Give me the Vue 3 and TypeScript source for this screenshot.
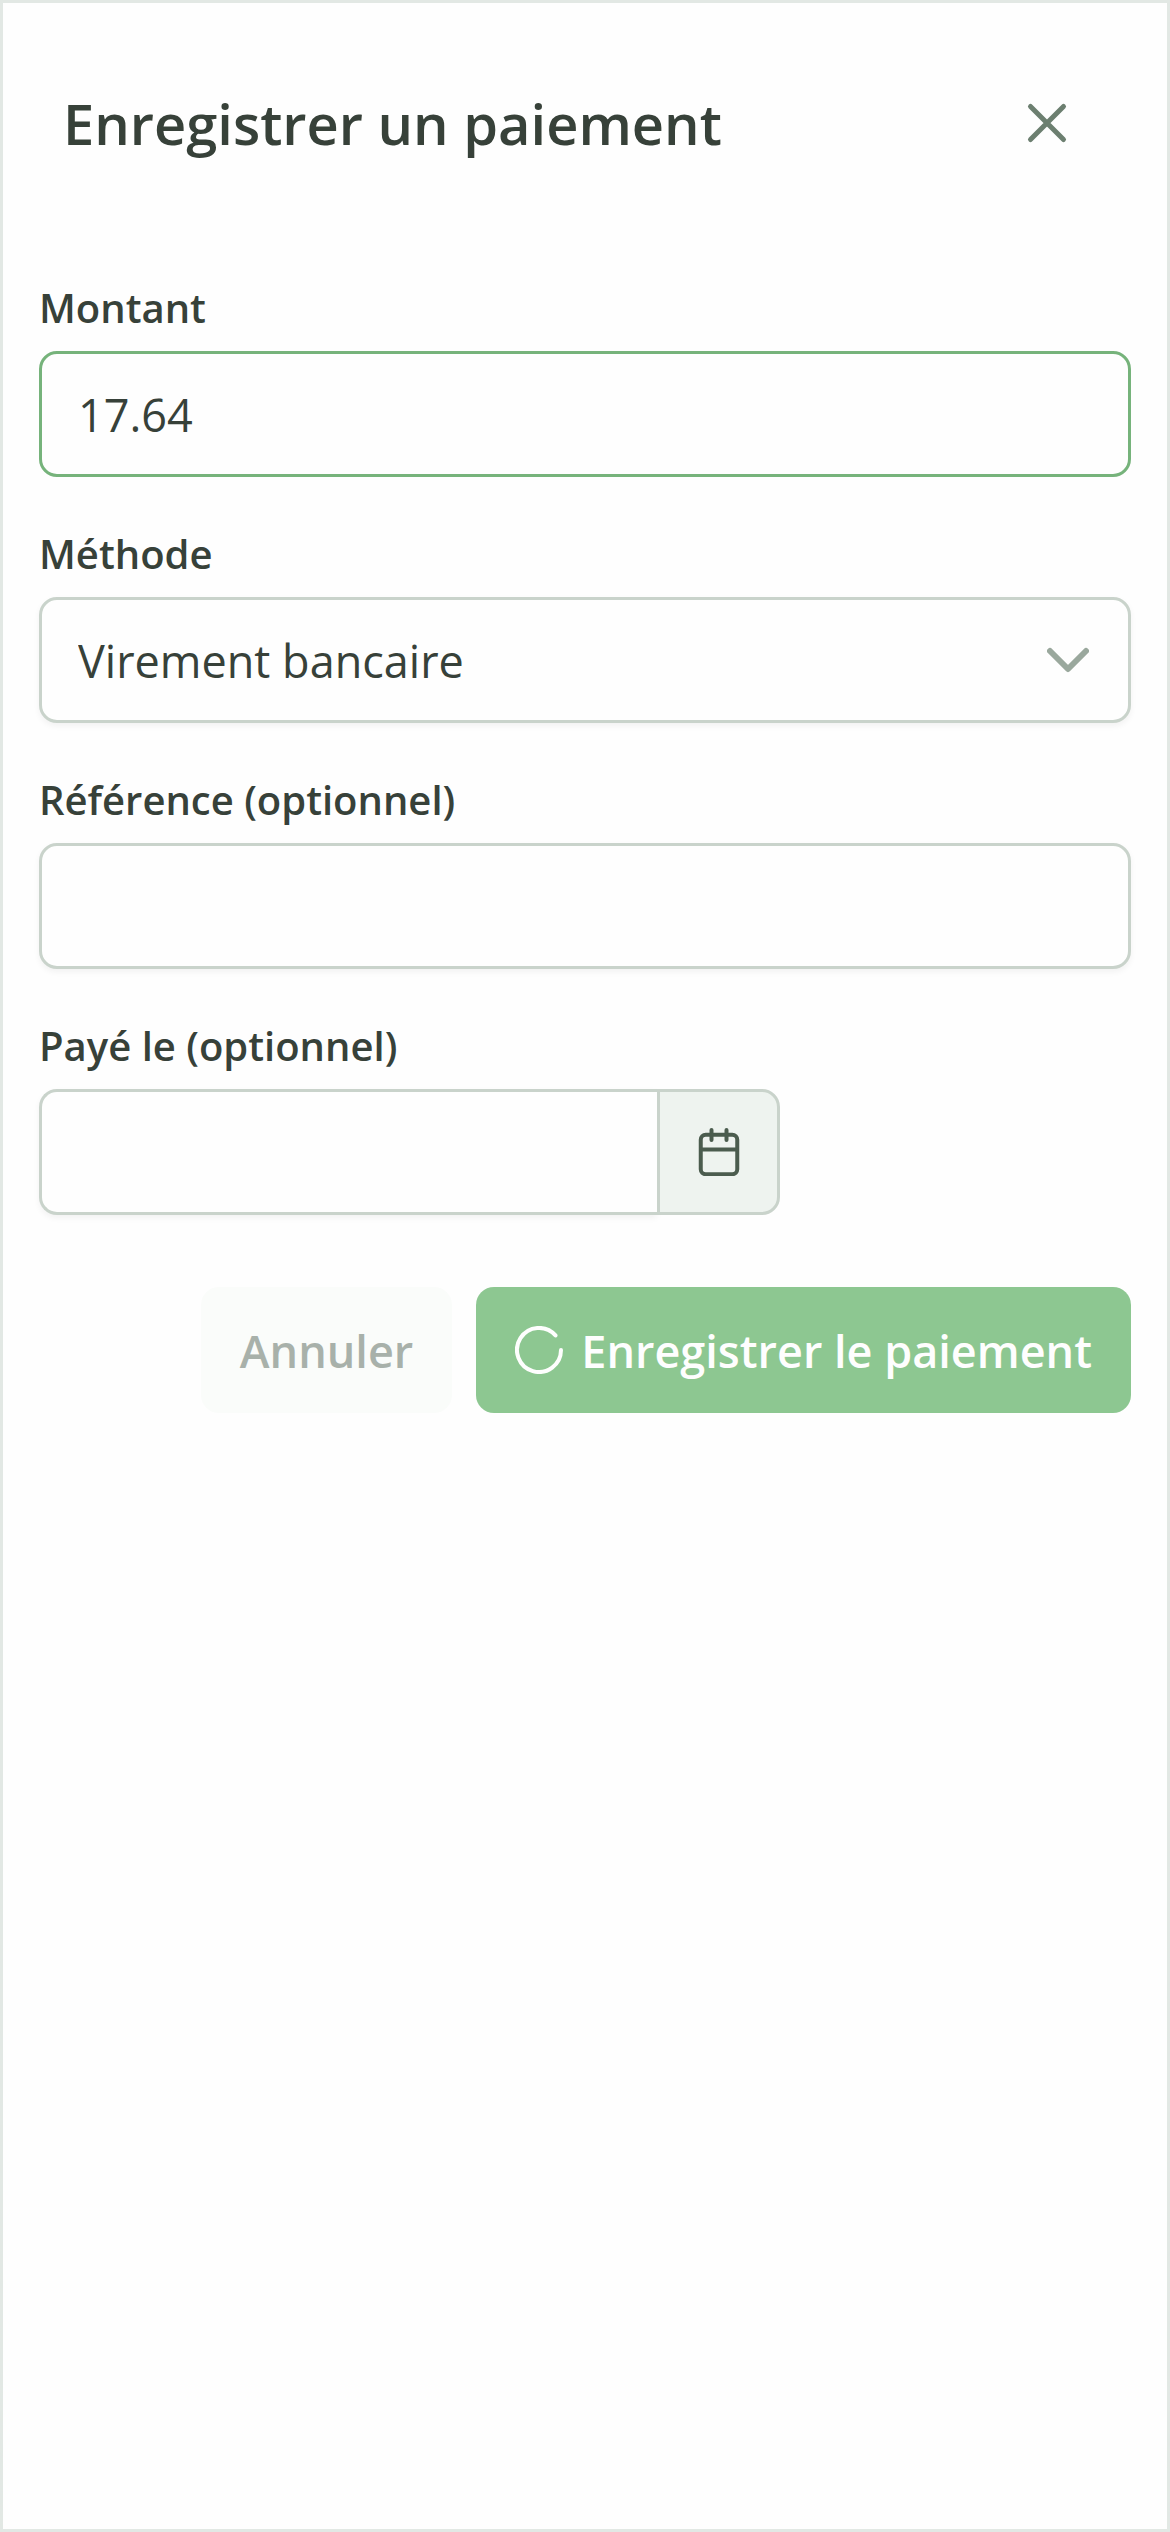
<script setup lang="ts">
import { ref } from 'vue'

const amount = ref('17.64')
const method = ref('transfer')
const reference = ref('')
const paidOn = ref('')
const saving = ref(true)
</script>

<template>
  <main class="dialog" role="dialog" aria-labelledby="dialog-title">
    <header class="header">
      <h1 id="dialog-title" class="title">Enregistrer un paiement</h1>
      <button class="close" type="button" aria-label="Fermer">
        <svg width="42" height="42" viewBox="0 0 42 42" fill="none" stroke="currentColor" stroke-width="5" stroke-linecap="round">
          <path d="M4.5 4.5 37.5 37.5M37.5 4.5 4.5 37.5" />
        </svg>
      </button>
    </header>

    <form class="form" @submit.prevent>
      <div class="field">
        <label class="label" for="amount">Montant</label>
        <input id="amount" v-model="amount" class="control active" type="text" inputmode="decimal" />
      </div>

      <div class="field">
        <label class="label" for="method">Méthode</label>
        <div class="select">
          <select id="method" v-model="method" class="control">
            <option value="transfer">Virement bancaire</option>
          </select>
          <svg class="chevron" width="42" height="42" viewBox="0 0 42 42" fill="none" stroke="currentColor" stroke-width="6" stroke-linecap="round" stroke-linejoin="round">
            <path d="M3 12 21 30 39 12" />
          </svg>
        </div>
      </div>

      <div class="field">
        <label class="label" for="reference">Référence (optionnel)</label>
        <input id="reference" v-model="reference" class="control" type="text" />
      </div>

      <div class="field">
        <label class="label" for="paid-on">Payé le (optionnel)</label>
        <div class="date">
          <input id="paid-on" v-model="paidOn" class="control date-input" type="text" />
          <button class="date-button" type="button" aria-label="Choisir une date">
            <svg width="48" height="48" viewBox="0 0 48 48" fill="none" stroke="currentColor" stroke-linecap="round">
              <rect x="5.75" y="6.75" width="36.5" height="39.5" rx="5" stroke-width="4" />
              <path d="M6 21.5H42M16.5 2V12M31.5 2V12" stroke-width="4" />
            </svg>
          </button>
        </div>
      </div>

      <div class="actions">
        <button class="button secondary" type="button" :disabled="saving">Annuler</button>
        <button class="button primary" type="submit" :disabled="saving">
          <svg v-if="saving" width="48" height="48" viewBox="0 0 48 48" fill="none" stroke="currentColor" stroke-width="4" stroke-linecap="round">
            <path d="M40.5 9.4A22 22 0 1 0 46 24" />
          </svg>
          <span>Enregistrer le paiement</span>
        </button>
      </div>
    </form>
  </main>
</template>

<style>
body {
  margin: 0;
}
</style>

<style scoped>
.dialog {
  box-sizing: border-box;
  min-height: 100vh;
  border: 3px solid #e2e8e4;
  background: #fefefe;
  color: #374139;
  font-family: "Segoe UI", "Open Sans", "Noto Sans", sans-serif;
}

.header {
  display: flex;
  align-items: center;
  justify-content: space-between;
  padding: 60px;
}

.title {
  margin: 0;
  font-size: 56px;
  font-weight: 600;
  line-height: 90px;
}

.close {
  display: flex;
  align-items: center;
  justify-content: center;
  width: 120px;
  height: 120px;
  padding: 0;
  border: 0;
  border-radius: 50%;
  background: none;
  color: #6c7f70;
}

.form {
  display: flex;
  flex-direction: column;
  gap: 45px;
  padding: 33px 36px 36px;
}

.field {
  display: flex;
  flex-direction: column;
  gap: 12px;
}

.label {
  font-size: 40px;
  font-weight: 600;
  line-height: 63px;
}

.control {
  box-sizing: border-box;
  width: 100%;
  height: 126px;
  margin: 0;
  padding: 0 36px;
  border: 3px solid #c9d3cb;
  border-radius: 18px;
  outline: 0;
  appearance: none;
  background: #fefefe;
  box-shadow: 0 3px 6px rgba(18, 18, 23, 0.05);
  color: inherit;
  font-family: inherit;
  font-size: 45px;
}

.control.active {
  border-color: #76b37b;
  box-shadow: none;
}

.select {
  position: relative;
}

.chevron {
  position: absolute;
  top: 42px;
  right: 42px;
  color: #9aa89d;
  pointer-events: none;
}

.date {
  display: flex;
  width: 741px;
  max-width: 100%;
}

.date-input {
  flex: 1;
  min-width: 0;
  border-right: 0;
  border-radius: 18px 0 0 18px;
}

.date-button {
  box-sizing: border-box;
  display: flex;
  align-items: center;
  justify-content: center;
  width: 123px;
  padding: 0;
  border: 3px solid #c9d3cb;
  border-radius: 0 18px 18px 0;
  background: #eef3ef;
  color: #4b5c4e;
}

.actions {
  display: flex;
  justify-content: flex-end;
  gap: 24px;
  margin-top: 27px;
}

.button {
  display: flex;
  align-items: center;
  gap: 18px;
  height: 126px;
  padding: 0 39px;
  border: 0;
  border-radius: 18px;
  font-family: inherit;
  font-size: 45px;
  font-weight: 600;
  white-space: nowrap;
}

.secondary {
  background: #fafcfa;
  color: #a8b1aa;
}

.primary {
  background: #8dc791;
  color: #fefefe;
}
</style>
